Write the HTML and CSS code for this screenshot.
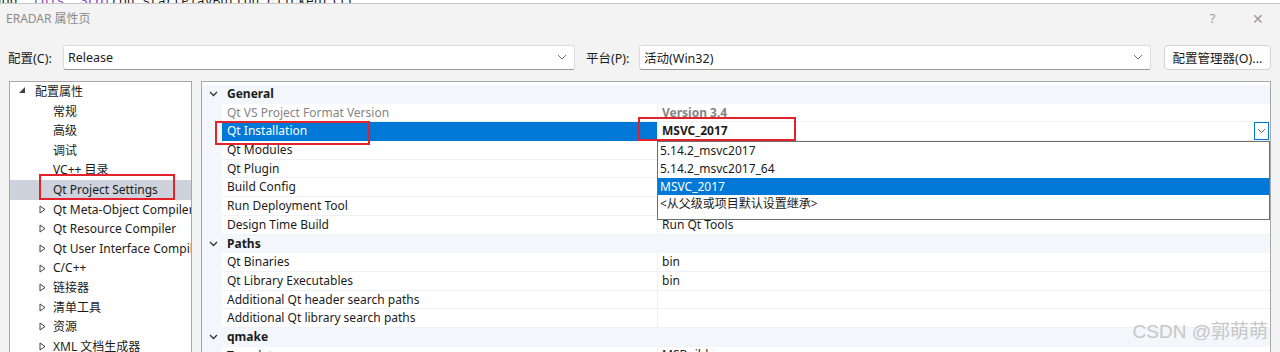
FILE: index.html
```html
<!DOCTYPE html>
<html lang="zh-CN">
<head>
  <meta charset="UTF-8">
  <title>ERADAR 属性页</title>
  <link rel="stylesheet" href="styles.css">
</head>
<body>
  <div class="code-strip"><span class="c-plain">Job:</span> <span class="c-kw">this</span>, <span class="c-kw">SLOT</span>(on_startPlayButton_clicked()));</div>

  <div class="dialog">
    <div class="titlebar">
      <span class="title">ERADAR 属性页</span>
      <span class="tb-help">?</span>
      <span class="tb-close">✕</span>
    </div>

    <div class="config-row">
      <label class="cfg-label">配置(C):</label>
      <div class="combo">
        <span>Release</span>
        <svg class="combo-arrow" width="10" height="6" viewBox="0 0 10 6"><polyline points="1,1 5,5 9,1" fill="none" stroke="#707070" stroke-width="1"/></svg>
      </div>
      <label class="cfg-label plat-label">平台(P):</label>
      <div class="combo">
        <span>活动(Win32)</span>
        <svg class="combo-arrow" width="10" height="6" viewBox="0 0 10 6"><polyline points="1,1 5,5 9,1" fill="none" stroke="#707070" stroke-width="1"/></svg>
      </div>
      <button class="cfg-btn">配置管理器(O)...</button>
    </div>

    <div class="panes">
      <div class="tree">
        <div class="node root">
          <svg class="tw" width="8" height="8" viewBox="0 0 8 8"><polygon points="7,1 7,7 1,7" fill="#404040"/></svg>
          <span>配置属性</span>
        </div>
        <div class="node leaf">常规</div>
        <div class="node leaf">高级</div>
        <div class="node leaf">调试</div>
        <div class="node leaf">VC++ 目录</div>
        <div class="node leaf selected">Qt Project Settings</div>
        <div class="node branch"><svg class="tw" width="7" height="9" viewBox="0 0 7 9"><polygon points="1,1 6,4.5 1,8" fill="none" stroke="#404040"/></svg><span>Qt Meta-Object Compiler</span></div>
        <div class="node branch"><svg class="tw" width="7" height="9" viewBox="0 0 7 9"><polygon points="1,1 6,4.5 1,8" fill="none" stroke="#404040"/></svg><span>Qt Resource Compiler</span></div>
        <div class="node branch"><svg class="tw" width="7" height="9" viewBox="0 0 7 9"><polygon points="1,1 6,4.5 1,8" fill="none" stroke="#404040"/></svg><span>Qt User Interface Compiler</span></div>
        <div class="node branch"><svg class="tw" width="7" height="9" viewBox="0 0 7 9"><polygon points="1,1 6,4.5 1,8" fill="none" stroke="#404040"/></svg><span>C/C++</span></div>
        <div class="node branch"><svg class="tw" width="7" height="9" viewBox="0 0 7 9"><polygon points="1,1 6,4.5 1,8" fill="none" stroke="#404040"/></svg><span>链接器</span></div>
        <div class="node branch"><svg class="tw" width="7" height="9" viewBox="0 0 7 9"><polygon points="1,1 6,4.5 1,8" fill="none" stroke="#404040"/></svg><span>清单工具</span></div>
        <div class="node branch"><svg class="tw" width="7" height="9" viewBox="0 0 7 9"><polygon points="1,1 6,4.5 1,8" fill="none" stroke="#404040"/></svg><span>资源</span></div>
        <div class="node branch"><svg class="tw" width="7" height="9" viewBox="0 0 7 9"><polygon points="1,1 6,4.5 1,8" fill="none" stroke="#404040"/></svg><span>XML 文档生成器</span></div>
      </div>

      <div class="grid">
        <div class="row cat">
          <div class="gutter"><svg width="9" height="6" viewBox="0 0 9 6"><polyline points="1,1 4.5,4.5 8,1" fill="none" stroke="#303030" stroke-width="1.3"/></svg></div>
          <div class="name">General</div>
          <div class="val"></div>
        </div>
        <div class="row dim">
          <div class="gutter"></div>
          <div class="name">Qt VS Project Format Version</div>
          <div class="val"><b>Version 3.4</b></div>
        </div>
        <div class="row active">
          <div class="gutter"></div>
          <div class="name">Qt Installation</div>
          <div class="val">
            <b>MSVC_2017</b>
            <span class="drop-btn"><svg width="9" height="6" viewBox="0 0 9 6"><polyline points="1,1 4.5,4.5 8,1" fill="none" stroke="#606060" stroke-width="1"/></svg></span>
          </div>
        </div>
        <div class="row"><div class="gutter"></div><div class="name">Qt Modules</div><div class="val"></div></div>
        <div class="row"><div class="gutter"></div><div class="name">Qt Plugin</div><div class="val"></div></div>
        <div class="row"><div class="gutter"></div><div class="name">Build Config</div><div class="val"></div></div>
        <div class="row"><div class="gutter"></div><div class="name">Run Deployment Tool</div><div class="val"></div></div>
        <div class="row"><div class="gutter"></div><div class="name">Design Time Build</div><div class="val">Run Qt Tools</div></div>
        <div class="row cat">
          <div class="gutter"><svg width="9" height="6" viewBox="0 0 9 6"><polyline points="1,1 4.5,4.5 8,1" fill="none" stroke="#303030" stroke-width="1.3"/></svg></div>
          <div class="name">Paths</div>
          <div class="val"></div>
        </div>
        <div class="row"><div class="gutter"></div><div class="name">Qt Binaries</div><div class="val">bin</div></div>
        <div class="row"><div class="gutter"></div><div class="name">Qt Library Executables</div><div class="val">bin</div></div>
        <div class="row"><div class="gutter"></div><div class="name">Additional Qt header search paths</div><div class="val"></div></div>
        <div class="row"><div class="gutter"></div><div class="name">Additional Qt library search paths</div><div class="val"></div></div>
        <div class="row cat">
          <div class="gutter"><svg width="9" height="6" viewBox="0 0 9 6"><polyline points="1,1 4.5,4.5 8,1" fill="none" stroke="#303030" stroke-width="1.3"/></svg></div>
          <div class="name">qmake</div>
          <div class="val"></div>
        </div>
        <div class="row"><div class="gutter"></div><div class="name">Template</div><div class="val">MSBuild</div></div>

        <!-- opened list of the Qt Installation cell -->
        <div class="dropdown">
          <div class="opt">5.14.2_msvc2017</div>
          <div class="opt">5.14.2_msvc2017_64</div>
          <div class="opt picked">MSVC_2017</div>
          <div class="opt">&lt;从父级或项目默认设置继承&gt;</div>
        </div>
      </div>
    </div>
  </div>

  <!-- red marks drawn over the screenshot -->
  <div class="mark mark-tree"></div>
  <div class="mark mark-name"></div>
  <div class="mark mark-value"></div>
  <div class="watermark">CSDN @郭萌萌</div>
</body>
</html>
```

FILE: styles.css
```css
body { margin: 0; width: 1280px; height: 352px; overflow: hidden; position: relative; background: #f3f3f3; color: #1b1b1b; font-family: "Noto Sans", "Noto Sans CJK SC", sans-serif; font-size: 12px; }

.code-strip { height: 3px; overflow: hidden; background: #fff; border-bottom: 1px solid #c9c9c9; font-family: "Liberation Mono", monospace; font-size: 13px; line-height: 4px; white-space: nowrap; text-indent: -6px; }
.c-plain { color: #1b1b1b; }
.c-kw { color: #7b3fc4; }

.dialog { background: #f3f3f3; }
.titlebar { height: 28px; display: flex; align-items: center; padding-left: 6px; color: #8a8a8a; font-size: 12px; }
.titlebar .title { flex: 1; }
.tb-help { width: 45px; text-align: center; font-size: 13px; color: #9a9a9a; }
.tb-close { width: 45px; text-align: center; font-size: 14px; color: #9a9a9a; }

.config-row { display: flex; align-items: center; height: 26px; margin-top: 12px; padding-left: 8px; }
.cfg-label { width: 55px; font-size: 12.5px; }
.plat-label { width: 53px; margin-left: 11px; }
.combo { box-sizing: border-box; width: 512px; height: 25px; background: #fff; border: 1px solid #dcdcdc; border-bottom-color: #9a9a9a; border-radius: 3px; display: flex; align-items: center; padding-left: 4px; font-size: 12.5px; }
.combo span { flex: 1; }
.combo-arrow { margin-right: 7px; }
.cfg-btn { box-sizing: border-box; width: 107px; height: 25px; margin-left: 13px; background: #fdfdfd; border: 1px solid #d3d3d3; border-radius: 4px; font-family: inherit; font-size: 12.5px; color: #1b1b1b; padding: 0; }

.panes { display: flex; margin-top: 11px; padding-left: 9px; gap: 9px; }

.tree { box-sizing: border-box; width: 183px; height: 300px; background: #fff; border: 1px solid #a8a8a8; overflow: hidden; }
.node { height: 19.6px; line-height: 19.6px; white-space: nowrap; overflow: hidden; display: flex; align-items: center; }
.tw { flex: none; }
.node.root { padding-left: 8px; }
.node.root .tw { margin-right: 9px; margin-top: -3px; }
.node.leaf { padding-left: 43px; }
.node.branch { padding-left: 29px; }
.node.branch .tw { margin-right: 7px; }
.node.selected { background: #cdd2dd; }

.grid { box-sizing: border-box; width: 1070px; height: 300px; background: #fff; border: 1px solid #a8a8a8; padding-top: 3px; position: relative; overflow: hidden; }
.row { display: flex; height: 18.7px; line-height: 18px; white-space: nowrap; }
.gutter { width: 20px; flex: none; background: #f3f6fa; display: flex; align-items: center; justify-content: center; padding-left: 3px; box-sizing: border-box; }
.name { box-sizing: border-box; width: 435px; flex: none; padding-left: 5px; border-bottom: 1px solid #eef2f7; overflow: hidden; }
.val { flex: 1; box-sizing: border-box; padding-left: 4px; border-left: 1px solid #eef2f7; border-bottom: 1px solid #eef2f7; display: flex; align-items: center; }
.row.cat .name, .row.cat .val { background: #f3f6fa; border-color: #f3f6fa; }
.row.cat .name { font-weight: bold; }
.row.dim .name { color: #858585; }
.row.dim .val { color: #858585; }
.row.active .name { background: #0078d7; color: #fff; border-bottom-color: #0078d7; }
.row.active .val b { flex: 1; }
.drop-btn { box-sizing: border-box; width: 15px; height: 18px; border: 1px solid #0078d7; background: #fff; display: flex; align-items: center; justify-content: center; margin-right: 1px; }

.dropdown { position: absolute; left: 455px; top: 59px; width: 613px; height: 79px; box-sizing: border-box; background: #fff; border: 1px solid #6e6e6e; }
.opt { height: 17.8px; line-height: 17.8px; padding-left: 2px; white-space: nowrap; }
.opt.picked { background: #0078d7; color: #fff; }

.mark { position: absolute; border: 2px solid #e3222b; box-sizing: border-box; }
.mark-tree { left: 39px; top: 174px; width: 136px; height: 26px; }
.mark-name { left: 215px; top: 121px; width: 155px; height: 24px; }
.mark-value { left: 638px; top: 117px; width: 158px; height: 24px; }

.watermark { position: absolute; right: 12px; bottom: 9px; font-family: "Liberation Sans", "Noto Sans CJK SC", sans-serif; font-size: 19px; color: #c6c6c6; }
```
